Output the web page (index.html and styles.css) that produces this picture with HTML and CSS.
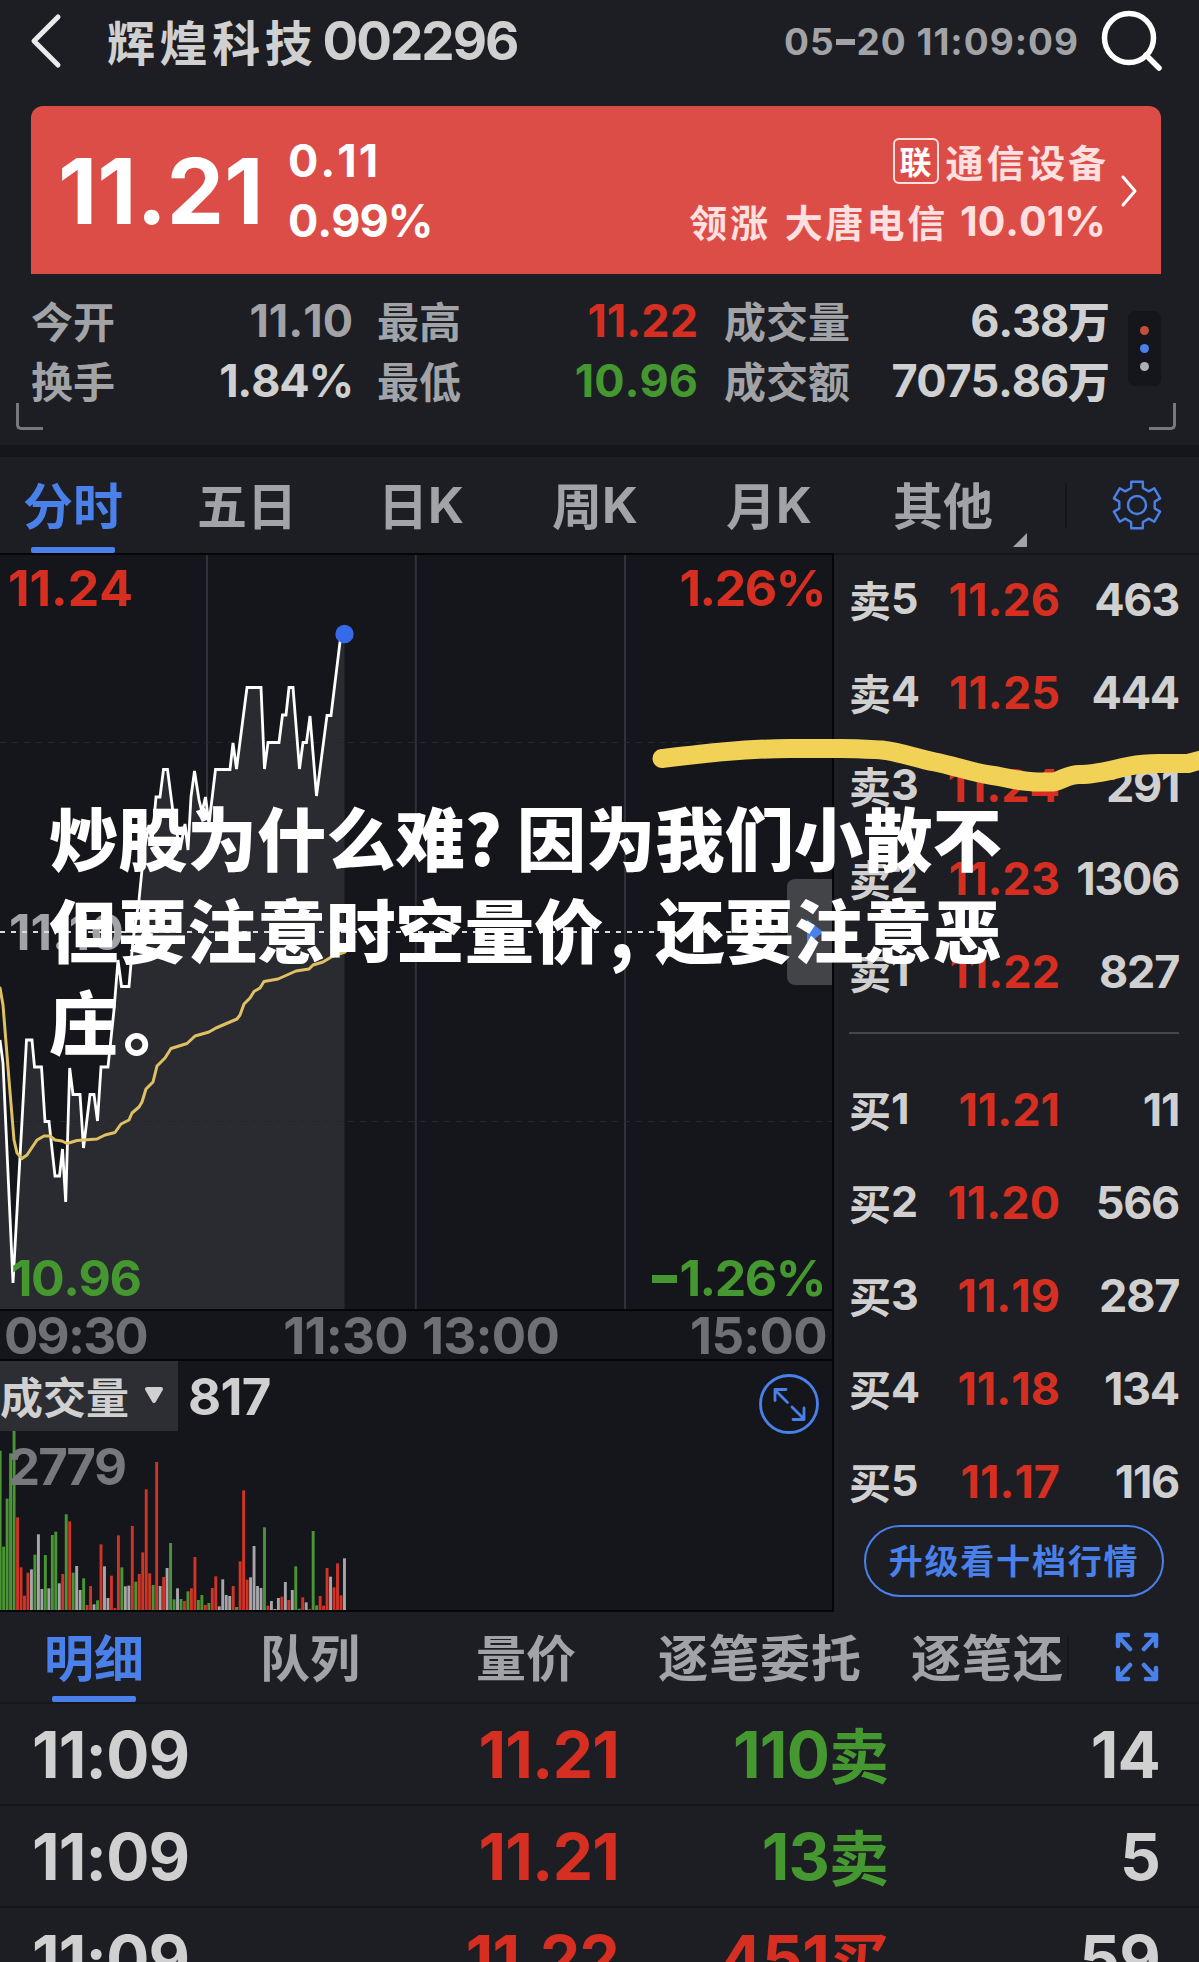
FILE: index.html
```html
<!DOCTYPE html>
<html lang="zh-CN">
<head>
  <meta charset="UTF-8" />
  <meta name="viewport" content="width=device-width, initial-scale=1.0" />
  <title>辉煌科技 002296</title>
  <link rel="stylesheet" href="styles.css">
</head>
<body>
  <header class="topbar">
    <svg class="back" width="32" height="56" viewBox="0 0 32 56"><path d="M28 4 L4 28 L28 52" /></svg>
    <h1>辉煌科技<span class="num code">002296</span></h1>
    <span class="num clock">05<i class="dash"></i>20 11:09:09</span>
    <svg class="search" width="64" height="64" viewBox="0 0 64 64"><circle cx="29" cy="29" r="24.5" /><path d="M46 46 L59 59" /></svg>
  </header>

  <section class="quote">
    <div class="num price">11.21</div>
    <div class="num change">
      <div class="diff">0.11</div>
      <div>0.99%</div>
    </div>
    <div class="sector">
      <div><span class="tag">联</span><span>通信设备</span></div>
      <div><span>领涨</span><span class="leader">大唐电信</span><span class="num">10.01%</span></div>
    </div>
    <svg class="more" width="18" height="34" viewBox="0 0 18 34"><path d="M3 3 L15 17 L3 31" /></svg>
  </section>

  <section class="stats">
    <div class="stat"><span>今开</span><b class="num dim">11.10</b><span>换手</span><b class="num tight">1.84%</b></div>
    <div class="stat"><span>最高</span><b class="num up">11.22</b><span>最低</span><b class="num down">10.96</b></div>
    <div class="stat"><span>成交量</span><b><span class="num tight">6.38</span>万</b><span>成交额</span><b><span class="num tight">7075.86</span>万</b></div>
    <div class="dots"><i></i><i></i><i></i></div>
    <div class="corner left"></div>
    <div class="corner right"></div>
  </section>

  <nav class="tabs">
    <div class="tab active">分时</div>
    <div class="tab">五日</div>
    <div class="tab">日<span class="num">K</span></div>
    <div class="tab">周<span class="num">K</span></div>
    <div class="tab">月<span class="num">K</span></div>
    <div class="tab other">其他</div>
    <div class="tool">
      <svg width="52" height="52" viewBox="-26 -26 52 52">
        <path id="gear" d="" />
        <circle r="9" />
      </svg>
    </div>
  </nav>

  <main class="board">
    <div class="charts">
      <div class="minute">
        <svg width="832" height="754" viewBox="0 555 832 754">
          <path class="area" d="M0 1040 L3 1063 L13 1283 L26.5 1040 L32 1040 L34.5 1067 L41.5 1067 L45 1121.5 L49 1121.5 L55 1176 L59.5 1176 L62.5 1149 L65.7 1202 L69.7 1068 L73 1094.5 L80 1094.5 L83.5 1148 L90 1094.5 L94 1094.5 L97.5 1121 L101 1067 L108 1067 L114 1010 L118 960 L121.5 986.5 L129 986.5 L133 940 L139 900 L144 850 L149 825 L152 843 L156 797 L160 797 L163.5 769.5 L167.5 769.5 L173 812 L180 850 L185 824 L188 850 L191 797 L194.5 771 L199 800 L202 812 L205.5 797 L209 824 L215.5 769.5 L230 769.5 L233 743 L236.5 769 L247 687.5 L261 687.5 L264.5 769 L268 742.5 L279 742.5 L282.5 715 L286 715 L289 687.5 L293 687.5 L299.5 769 L303 742.5 L306.5 742.5 L310 716 L316.5 796 L327 715.5 L331 715.5 L340 642 L344.5 634 V1309 H0 Z" />
          <path class="grid" d="M207 555 V824 M415.8 555 V1309 M625 555 V1309" />
          <path class="grid faint" d="M0 742.5 H832 M0 1121.5 H832" />
          <text class="num axis mid" x="9" y="950">11.10</text>
          <path class="base" d="M0 932 H832" />
          <path class="line" d="M0 1040 L3 1063 L13 1283 L26.5 1040 L32 1040 L34.5 1067 L41.5 1067 L45 1121.5 L49 1121.5 L55 1176 L59.5 1176 L62.5 1149 L65.7 1202 L69.7 1068 L73 1094.5 L80 1094.5 L83.5 1148 L90 1094.5 L94 1094.5 L97.5 1121 L101 1067 L108 1067 L114 1010 L118 960 L121.5 986.5 L129 986.5 L133 940 L139 900 L144 850 L149 825 L152 843 L156 797 L160 797 L163.5 769.5 L167.5 769.5 L173 812 L180 850 L185 824 L188 850 L191 797 L194.5 771 L199 800 L202 812 L205.5 797 L209 824 L215.5 769.5 L230 769.5 L233 743 L236.5 769 L247 687.5 L261 687.5 L264.5 769 L268 742.5 L279 742.5 L282.5 715 L286 715 L289 687.5 L293 687.5 L299.5 769 L303 742.5 L306.5 742.5 L310 716 L316.5 796 L327 715.5 L331 715.5 L340 642 L344.5 634" />
          <path class="average" d="M0 988 L3 1005 L9 1080 L14 1140 L17 1153 L22 1158.5 L27 1155 L37 1140 L44 1136 L50 1136 L55 1140 L62 1141 L67 1143.5 L77 1140.5 L97 1139 L105 1135 L115 1132.5 L121 1124 L129 1120 L132 1113 L139 1107 L142 1102 L146 1089 L153 1082 L157 1066 L165 1058 L171 1048.5 L187 1043.5 L195 1036 L209 1032 L216 1028 L237 1019 L240 1015 L244 1004 L250 998 L254 991.5 L260 988 L264 981.5 L278 979 L296 971 L309 969 L313 965 L323 962 L333 956 L345 952" />
          <circle class="now" cx="344.5" cy="634" r="9.2" />
        </svg>
        <span class="num label tl up">11.24</span>
        <span class="num label tr up">1.26%</span>
        <span class="num label bl down">10.96</span>
        <span class="num label br down"><i class="dash"></i>1.26%</span>
        <div class="handle"><svg width="18" height="26" viewBox="0 0 18 26"><path d="M1 0 L17 13 L1 26 Z" /></svg></div>
      </div>

      <div class="num times">
        <div><span class="tight">09:30</span><span>11:30</span></div>
        <div><span>13:00</span><span>15:00</span></div>
      </div>

      <div class="volume">
        <svg class="bars" id="bars" width="832" height="179" viewBox="0 0 832 179"></svg>
        <div class="vol-head">
          <div class="picker">成交量<svg width="20" height="17" viewBox="0 0 20 17"><path d="M3 2 H17 L10 14 Z" /></svg></div>
          <span class="num">817</span>
        </div>
        <div class="num vol-max">2779</div>
        <svg class="zoom" width="62" height="62" viewBox="-31 -31 62 62">
          <circle r="28.5" />
          <path d="M-1.5 -1.5 L-14 -14 M-14 -3.5 V-14.5 H-3 M3 3 L15 15 M15 4 V15.5 H4" />
        </svg>
      </div>
    </div>

    <aside class="book">
      <div class="level"><span>卖<em class="num">5</em></span><b class="num">11.26</b><span class="num">463</span></div>
      <div class="level"><span>卖<em class="num">4</em></span><b class="num">11.25</b><span class="num">444</span></div>
      <div class="level"><span>卖<em class="num">3</em></span><b class="num">11.24</b><span class="num">291</span></div>
      <div class="level"><span>卖<em class="num">2</em></span><b class="num">11.23</b><span class="num">1306</span></div>
      <div class="level"><span>卖<em class="num">1</em></span><b class="num">11.22</b><span class="num">827</span></div>
      <hr />
      <div class="level"><span>买<em class="num">1</em></span><b class="num">11.21</b><span class="num">11</span></div>
      <div class="level"><span>买<em class="num">2</em></span><b class="num">11.20</b><span class="num">566</span></div>
      <div class="level"><span>买<em class="num">3</em></span><b class="num">11.19</b><span class="num">287</span></div>
      <div class="level"><span>买<em class="num">4</em></span><b class="num">11.18</b><span class="num">134</span></div>
      <div class="level"><span>买<em class="num">5</em></span><b class="num">11.17</b><span class="num">116</span></div>
      <button>升级看十档行情</button>
    </aside>
  </main>

  <nav class="tabs detail-tabs">
    <div class="tab active">明细</div>
    <div class="tab">队列</div>
    <div class="tab">量价</div>
    <div class="tab wide">逐笔委托</div>
    <div class="tab cut">逐笔还</div>
    <div class="tool">
      <svg width="44" height="50" viewBox="-22 -25 44 50">
        <path d="M-7 -8 L-19 -21 M-19 -11 V-22 H-9 M7 -8 L19 -21 M19 -11 V-22 H9 M-7 8 L-19 21 M-19 11 V22 H-9 M7 8 L19 21 M19 11 V22 H9" />
      </svg>
    </div>
  </nav>

  <section class="trades">
    <div class="trade"><span class="num">11:09</span><span class="num up">11.21</span><span class="down"><em class="num">110</em>卖</span><span class="num">14</span></div>
    <div class="trade"><span class="num">11:09</span><span class="num up">11.21</span><span class="down"><em class="num">13</em>卖</span><span class="num">5</span></div>
    <div class="trade"><span class="num">11:09</span><span class="num up">11.22</span><span class="up"><em class="num">451</em>买</span><span class="num">59</span></div>
  </section>

  <svg class="brush" width="547" height="60" viewBox="652 735 547 60">
    <path d="M662 758.5 C700 754 745 748.5 790 748.5 L840 748.5 C860 748.5 872 749.5 882 750 C900 752 915 758 935 762 C955 766 970 772 990 775 C1005 777 1020 782 1038 782 L1054 782 C1064 779 1070 774 1080 774.5 C1095 775 1115 769 1130 766 C1145 763 1150 763.5 1165 763.5 H1188 L1212 757" />
  </svg>
  <p class="caption">炒股为什么难<span class="mark">?</span>因为我们小散不<br />但要注意时空量价<span class="mark comma">,</span>还要注意恶<br />庄<span class="stop">。</span></p>

  <script>
    // per-minute volume: g = down, r = up, w = flat
    const volumes = "g478 g190 g334 g470 g538 r278 r128 r43 r112 w122 g166 w227 w63 g165 w65 g225 g235 w80 r108 g287 r266 g112 w132 w60 g95 r15 r72 w17 g29 r197 w131 w36 r103 r6 r224 g128 w71 w73 r252 g85 r108 r173 r362 r110 g75 r444 w72 r99 w126 g201 g32 w65 g33 r27 g56 r65 r159 g30 g45 r15 g21 r66 r101 w11 w92 w45 w42 r72 g9 r146 r359 r91 w98 w192 w72 w66 g248 r13 w27 w3 w36 r40 w84 r30 w60 g131 g4 r38 w23 r3 g237 g14 r42 r13 r126 w100 r68 r140 r44 w155".split(" ");
    const barBox = document.getElementById("bars");
    const ns = "http://www.w3.org/2000/svg";

    volumes.forEach((item, i) => {
      const h = parseInt(item.slice(1)) / 3;
      const rect = document.createElementNS(ns, "rect");
      rect.setAttribute("class", "bar-" + item[0]);
      rect.setAttribute("x", (i * 3.478 - 1.3).toFixed(2));
      rect.setAttribute("y", (179 - h).toFixed(2));
      rect.setAttribute("width", 2.9);
      rect.setAttribute("height", h.toFixed(2));
      barBox.appendChild(rect);
    });

    // six-tooth settings gear
    let d = "";
    for (let k = 0; k < 6; k++) {
      [[-14, 24], [14, 24], [19, 18], [41, 18]].forEach(([deg, r]) => {
        const a = (k * 60 + deg - 90) * Math.PI / 180;
        d += (d ? "L" : "M") + (r * Math.cos(a)).toFixed(1) + " " + (r * Math.sin(a)).toFixed(1);
      });
    }
    document.getElementById("gear").setAttribute("d", d + "Z");
  </script>
</body>
</html>
```
FILE: styles.css
```css
* {
  box-sizing: border-box;
}
body {
  position: relative;
  margin: 0;
  width: 1199px;
  height: 1962px;
  overflow: hidden;
  background: #1c1e23;
  color: #d0d0d0;
  font-family: "Noto Sans CJK SC", sans-serif;
  font-weight: 700;
  line-height: 1;
}
.num {
  font-family: Inter, sans-serif;
  font-weight: 650;
  font-style: normal;
  font-kerning: none;
}
.up {
  color: #d62f22;
}
.down {
  color: #45982f;
}
svg path, svg circle {
  fill: none;
  stroke-linecap: round;
  stroke-linejoin: round;
}
.dash {
  display: inline-block;
  width: 0.49em;
  height: 0.15em;
  margin: 0 0.05em;
  background: currentColor;
  vertical-align: 0.27em;
}

/* top bar */
.topbar {
  display: flex;
  align-items: center;
  height: 106px;
  padding: 0 35px 24px 30px;
}
.back path {
  stroke: #eaeaea;
  stroke-width: 5;
}
.topbar h1 {
  display: flex;
  align-items: center;
  margin: -2px 0 0 45px;
  font-size: 48px;
  font-weight: 700;
  letter-spacing: 4.6px;
}
.code {
  margin: 2px 0 0 5px;
  font-size: 53px;
  letter-spacing: -2px;
}
.clock {
  margin-left: auto;
  font-size: 37px;
  letter-spacing: 1px;
  color: #a2a3a7;
}
.search {
  margin-left: 21px;
}
.search path, .search circle {
  stroke: #fff;
  stroke-width: 5.5;
}

/* price card */
.quote {
  display: flex;
  align-items: center;
  width: 1130px;
  height: 168px;
  margin-left: 31px;
  padding: 2px 23px 0 27px;
  border-radius: 12px 12px 0 0;
  background: #dd4d48;
  color: #fff;
}
.price {
  width: 230px;
  font-size: 91px;
  font-weight: 700;
  letter-spacing: 0;
}
.change {
  font-size: 45px;
  line-height: 60px;
  letter-spacing: -1px;
}
.diff {
  letter-spacing: 2px;
}
.sector {
  margin-left: auto;
  font-size: 38px;
  line-height: 60px;
  letter-spacing: 2.8px;
  color: #fde0df;
}
.sector div {
  display: flex;
  justify-content: flex-end;
  align-items: center;
}
.sector div:first-child {
  margin-right: -2.8px;
}
.sector .num {
  font-size: 41px;
  letter-spacing: 0;
}
.leader {
  margin: 0 12px 0 14px;
}
.tag {
  width: 46px;
  height: 46px;
  margin-right: 7px;
  border: 2px solid #fde0df;
  border-radius: 6px;
  font-size: 32px;
  line-height: 40px;
  letter-spacing: 0;
  text-align: center;
  color: #fff;
}
.more {
  margin-left: 14px;
}
.more path {
  stroke: #fff;
  stroke-width: 3;
}

/* stats */
.stats {
  position: relative;
  display: flex;
  height: 183px;
  padding: 16px 38px 0 31px;
  border-bottom: 12px solid #14161b;
}
.stat {
  display: grid;
  grid-template-columns: auto auto;
  justify-content: space-between;
  align-content: start;
  align-items: center;
  grid-auto-rows: 60px;
  width: 322px;
  margin-right: 24px;
  font-size: 42px;
  color: #a2a3a7;
}
.stat:nth-child(2) {
  width: 321px;
  margin-right: 26px;
}
.stat:nth-child(3) {
  width: 386px;
  margin-right: 18px;
}
.stat b {
  display: flex;
  align-items: center;
  justify-content: flex-end;
  color: #d0d0d0;
}
.stat .num {
  font-size: 45px;
}
.stat .tight {
  letter-spacing: -1.2px;
}
.stat .dim {
  color: #a2a3a7;
}
.stat .up {
  color: #d62f22;
}
.stat .down {
  color: #45982f;
}
.dots {
  display: flex;
  flex-direction: column;
  align-items: center;
  justify-content: center;
  gap: 9px;
  width: 33px;
  height: 75px;
  margin-top: 21px;
  border-radius: 7px;
  background: #14161b;
}
.dots i {
  width: 9px;
  height: 9px;
  border-radius: 50%;
  background: #c04f3b;
}
.dots i:nth-child(2) {
  background: #4a80ea;
}
.dots i:nth-child(3) {
  background: #b0b0b3;
}
.corner {
  position: absolute;
  top: 129px;
  width: 27px;
  height: 27px;
  border-bottom: 3px solid #77787c;
}
.corner.left {
  left: 16px;
  border-left: 3px solid #77787c;
  border-bottom-left-radius: 5px;
}
.corner.right {
  right: 23px;
  border-right: 3px solid #77787c;
  border-bottom-right-radius: 5px;
}

/* tabs */
.tabs {
  display: flex;
  height: 98px;
  padding-right: 35px;
  border-bottom: 2px solid #15161b;
  font-size: 50px;
  color: #a2a3a7;
}
.tab {
  position: relative;
  display: flex;
  flex: none;
  align-items: center;
  justify-content: center;
  width: 174px;
  height: 96px;
  padding-bottom: 4px;
}
.tab .num {
  margin-top: 4px;
}
.tab:first-child {
  margin-left: -14px;
}
.tab.active {
  color: #4a80ea;
}
.tab.active::after {
  content: "";
  position: absolute;
  bottom: 0;
  left: 45px;
  width: 84px;
  height: 6px;
  border-radius: 2px;
  background: #4a80ea;
}
.tab.other::after {
  content: "";
  position: absolute;
  right: 3px;
  bottom: 6px;
  border: 7.5px solid #a2a3a7;
  border-left-color: transparent;
  border-top-color: transparent;
}
.tool {
  display: flex;
  align-items: center;
  margin-left: auto;
}
.tool::before {
  content: "";
  width: 2px;
  height: 45px;
  margin-right: 44px;
  background: #14161b;
}
.tool path, .tool circle {
  stroke: #4a80ea;
  stroke-width: 2.4;
}
.tool svg {
  margin-right: 1px;
}

/* charts */
.board {
  display: flex;
  height: 1057px;
}
.charts {
  width: 834px;
  margin-top: -2px;
  border: 2px solid #040506;
  border-left: 0;
  background: #15161b;
}
.minute {
  position: relative;
  height: 756px;
  border-bottom: 2px solid #040506;
}
.minute > svg {
  display: block;
}
.minute .area {
  fill: #2a2b30;
}
.grid {
  stroke: #303139;
  stroke-width: 2;
}
.grid.faint {
  stroke: #24262b;
  stroke-width: 1.2;
  stroke-dasharray: 6 6;
  stroke-linecap: butt;
}
.base {
  stroke: #dcdcdc;
  stroke-width: 1.8;
  stroke-dasharray: 5 6;
}
.minute .base, .minute .line {
  stroke-linecap: butt;
}
.line {
  stroke: #fff;
  stroke-width: 2.8;
}
.minute .line {
  stroke-linejoin: miter;
}
.average {
  stroke: #dfc163;
  stroke-width: 3;
}
.minute .now {
  fill: #356bea;
}
.axis {
  fill: #a2a3a7;
  font-size: 50px;
}
.label {
  position: absolute;
  font-size: 50px;
}
.tl {
  top: 8px;
  left: 8px;
}
.tr {
  top: 8px;
  right: 7px;
  letter-spacing: -1.5px;
}
.bl {
  left: 11px;
  bottom: 6px;
  letter-spacing: -1.5px;
}
.br {
  right: 7px;
  bottom: 6px;
  letter-spacing: -1.5px;
}
.handle {
  position: absolute;
  right: 0;
  top: 324px;
  display: flex;
  align-items: center;
  width: 45px;
  height: 106px;
  padding-left: 19px;
  border-radius: 8px 0 0 8px;
  background: #434448;
}
.handle path {
  fill: #4a80ea;
}
.times {
  display: flex;
  height: 50px;
  border-bottom: 2px solid #040506;
  font-size: 51px;
  line-height: 49px;
  letter-spacing: -0.7px;
  color: #6f7075;
}
.times .tight {
  letter-spacing: -1.8px;
}
.times div {
  display: flex;
  justify-content: space-between;
  width: 408px;
  padding-left: 4px;
}
.times div + div {
  width: 424px;
  padding: 0 5px 0 14px;
}
.volume {
  position: relative;
  height: 249px;
}
.bars {
  position: absolute;
  left: 0;
  bottom: 0;
}
.bar-r {
  fill: #cf3427;
}
.bar-g {
  fill: #4a9636;
}
.bar-w {
  fill: #a6a6aa;
}
.vol-head {
  position: relative;
  display: flex;
  align-items: center;
  font-size: 51px;
  letter-spacing: -0.7px;
}
.picker {
  display: flex;
  align-items: center;
  gap: 15px;
  width: 178px;
  height: 70px;
  margin-right: 10px;
  padding-bottom: 2px;
  background: #2d2e33;
  font-size: 43px;
  letter-spacing: 0;
}
.picker path {
  fill: #d0d0d0;
  stroke: #d0d0d0;
  stroke-width: 4;
}
.vol-max {
  position: relative;
  margin: 10px 0 0 8px;
  font-size: 51px;
  letter-spacing: -1.8px;
  color: #77787c;
}
.zoom {
  position: absolute;
  top: 12px;
  right: 12px;
}
.zoom path, .zoom circle {
  stroke: #4a80ea;
  stroke-width: 2.8;
}

/* order book */
.book {
  width: 345px;
  padding-left: 15px;
}
.level {
  display: grid;
  grid-template-columns: 60px 151px 119px;
  align-items: center;
  height: 93px;
}
.level:first-child {
  margin-top: -2px;
}
.level > * {
  display: flex;
  align-items: center;
  justify-content: flex-end;
}
.level span:first-child {
  justify-content: flex-start;
  padding-bottom: 2px;
  font-size: 42px;
}
.level em {
  font-size: 43px;
}
.level > .num {
  font-size: 45px;
}
.level > span.num {
  letter-spacing: -1.3px;
}
.level b {
  color: #d62f22;
}
.book hr {
  height: 2px;
  margin: 14px 0 29px;
  border: 0;
  background: #454750;
}
.book button {
  display: block;
  width: 300px;
  height: 72px;
  margin: -3px 0 0 15px;
  padding: 0 0 4px;
  border: 2px solid #4a80ea;
  border-radius: 36px;
  background: none;
  color: #4a80ea;
  font: 700 34px "Noto Sans CJK SC", sans-serif;
  letter-spacing: 1.8px;
}

/* trade list */
.detail-tabs {
  height: 92px;
}
.detail-tabs .tab {
  width: 216px;
  height: 90px;
}
.detail-tabs .tab.active::after {
  left: 66px;
}
.detail-tabs .tab.wide {
  width: 252px;
  letter-spacing: 1px;
}
.detail-tabs .tab.cut {
  width: 180px;
  padding-left: 25px;
  justify-content: flex-start;
  letter-spacing: 1px;
}
.detail-tabs .tool::before {
  margin-right: 46px;
}
.detail-tabs .tool svg {
  margin-right: 5px;
}
.detail-tabs .tool path {
  stroke-width: 4.5;
}
.trade {
  display: grid;
  grid-template-columns: 200px 387px 270px 271px;
  height: 102px;
  padding: 2px 0 0 32px;
  border-bottom: 2px solid #15161b;
  font-size: 60px;
}
.trade > span {
  display: flex;
  align-items: center;
  justify-content: flex-end;
}
.trade > span:first-child {
  justify-content: flex-start;
}
.trade > span:nth-child(3) {
  padding-bottom: 4px;
}
.trade em {
  padding-top: 4px;
}
.trade .num {
  font-size: 64px;
  letter-spacing: -0.8px;
}

/* annotations over the screen */
.brush {
  position: absolute;
  left: 652px;
  top: 735px;
}
.brush path {
  stroke: #f2d157;
  stroke-width: 19;
}
.caption {
  position: absolute;
  left: 49px;
  top: 790px;
  margin: 0;
  font-size: 69.3px;
  font-weight: 900;
  line-height: 92px;
  white-space: nowrap;
  color: #fff;
}
.mark {
  display: inline-block;
  width: 52px;
}
.comma {
  padding-left: 6px;
}
.stop {
  padding-left: 5px;
}
```
